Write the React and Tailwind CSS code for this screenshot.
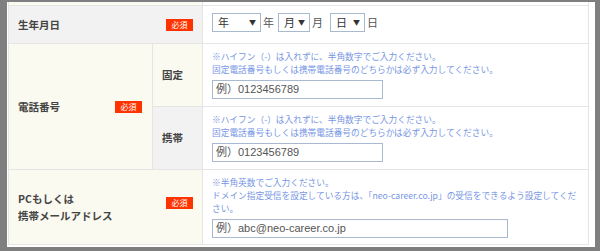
const font = { fontFamily: '"Noto Sans CJK JP", "Noto Sans", sans-serif' };
const inputFont = { fontFamily: '"Liberation Sans", Arial, "Noto Sans CJK JP", sans-serif' };

function Badge() {
  return (
    <span className="inline-flex h-[12px] w-[27px] items-center justify-center bg-[#ff3300] text-[8px] leading-none text-white">
      必須
    </span>
  );
}

function Select({ label, w }) {
  return (
    <div
      className={`flex h-[19px] items-center justify-between border border-[#a9b9cf] bg-white pl-[5px] pr-[4px] text-[11px] text-[#333] ${w}`}
    >
      <span>{label}</span>
      <span className="text-[7px]">▼</span>
    </div>
  );
}

function Hint({ lines }) {
  return (
    <div className="whitespace-nowrap text-[8.7px] leading-[13px] text-[#7796e4]">
      {lines.map((l, i) => (
        <div key={i}>{l}</div>
      ))}
    </div>
  );
}

function Field({ placeholder, w }) {
  return (
    <div
      className={`mt-[4px] flex h-[19px] items-center border border-[#a9b9cf] bg-white pl-[3px] text-[11px] text-[#555] ${w}`}
      style={inputFont}
    >
      {placeholder}
    </div>
  );
}

export default function App() {
  const phoneHint = [
    "※ハイフン（-）は入れずに、半角数字でご入力ください。",
    "固定電話番号もしくは携帯電話番号のどちらかは必ず入力してください。",
  ];

  return (
    <div className="h-[251px] w-[600px] bg-[#7f7f7f] pb-[4px] pl-[7px] pr-[5px] pt-[2px]" style={font}>
      <div className="h-full bg-white pb-[2px] pl-[1px] pr-[6px]">
        <div className="grid w-[581px] grid-cols-[144px_50px_1fr] grid-rows-[3px_38px_63px_63px_75px] border-b border-l border-r border-[#e5e5e5]">
          {/* tail of the previous row */}
          <div className="col-span-2 border-r border-[#e5e5e5] bg-[#fafaf0]" />
          <div />

          {/* 生年月日 */}
          <div className="col-span-2 flex items-center justify-between border-r border-t border-[#e5e5e5] bg-[#f2f2f2] pl-[9px] pr-[9px]">
            <span className="text-[10.5px] font-bold text-[#444]">生年月日</span>
            <Badge />
          </div>
          <div className="flex items-start gap-[2px] border-t border-[#e5e5e5] pl-[9px] pt-[7px] text-[11px] text-[#555]">
            <Select label="年" w="w-[49px]" />
            <span className="leading-[19px]">年</span>
            <div className="ml-[2px]">
              <Select label="月" w="w-[32px]" />
            </div>
            <span className="leading-[19px]">月</span>
            <div className="ml-[5px]">
              <Select label="日" w="w-[35px]" />
            </div>
            <span className="leading-[19px]">日</span>
          </div>

          {/* 電話番号 */}
          <div className="row-span-2 flex items-center justify-between border-r border-t border-[#e5e5e5] bg-[#fafaf0] pl-[9px] pr-[10px]">
            <span className="text-[10.5px] font-bold text-[#444]">電話番号</span>
            <Badge />
          </div>
          <div className="flex items-center border-r border-t border-[#e5e5e5] bg-[#fafaf0] pl-[9px]">
            <span className="text-[10.5px] font-bold text-[#444]">固定</span>
          </div>
          <div className="border-t border-[#e5e5e5] pl-[9px] pt-[6px]">
            <Hint lines={phoneHint} />
            <Field placeholder="例）0123456789" w="w-[171px]" />
          </div>

          <div className="flex items-center border-r border-t border-[#e5e5e5] bg-[#f2f2f2] pl-[9px]">
            <span className="text-[10.5px] font-bold text-[#444]">携帯</span>
          </div>
          <div className="border-t border-[#e5e5e5] pl-[9px] pt-[6px]">
            <Hint lines={phoneHint} />
            <Field placeholder="例）0123456789" w="w-[171px]" />
          </div>

          {/* メールアドレス */}
          <div className="col-span-2 flex items-center justify-between border-r border-t border-[#e5e5e5] bg-[#fafaf0] pl-[9px] pr-[9px]">
            <div className="text-[10.5px] font-bold leading-[17px] text-[#444]">
              <div>PCもしくは</div>
              <div>携帯メールアドレス</div>
            </div>
            <div className="-mt-[17px]">
              <Badge />
            </div>
          </div>
          <div className="border-t border-[#e5e5e5] pl-[9px] pt-[6px]">
            <Hint
              lines={[
                "※半角英数でご入力ください。",
                "ドメイン指定受信を設定している方は、「neo-career.co.jp」の受信をできるよう設定してくだ",
                "さい。",
              ]}
            />
            <Field placeholder="例）abc@neo-career.co.jp" w="w-[296px]" />
          </div>
        </div>
      </div>
    </div>
  );
}
